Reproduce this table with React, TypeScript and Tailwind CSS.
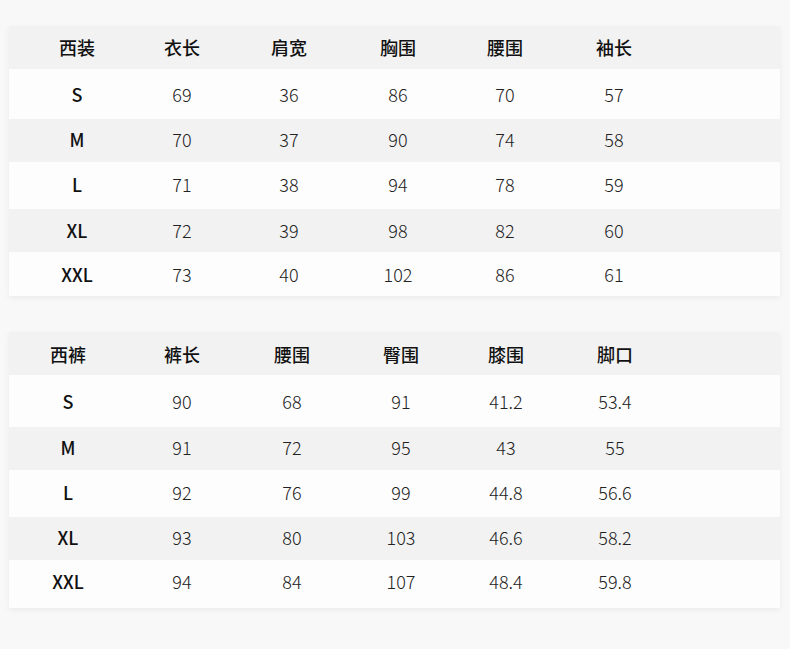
const suit = {
  head: ['西装', '衣长', '肩宽', '胸围', '腰围', '袖长'],
  rows: [
    ['S', '69', '36', '86', '70', '57'],
    ['M', '70', '37', '90', '74', '58'],
    ['L', '71', '38', '94', '78', '59'],
    ['XL', '72', '39', '98', '82', '60'],
    ['XXL', '73', '40', '102', '86', '61'],
  ],
};

const pants = {
  head: ['西裤', '裤长', '腰围', '臀围', '膝围', '脚口'],
  rows: [
    ['S', '90', '68', '91', '41.2', '53.4'],
    ['M', '91', '72', '95', '43', '55'],
    ['L', '92', '76', '99', '44.8', '56.6'],
    ['XL', '93', '80', '103', '46.6', '58.2'],
    ['XXL', '94', '84', '107', '48.4', '59.8'],
  ],
};

type TableProps = {
  data: { head: string[]; rows: string[][] };
  cols: string;
  firstPad: string;
  heights: string[];
};

function SizeTable({ data, cols, firstPad, heights }: TableProps) {
  return (
    <div className="bg-[#fdfdfd] shadow-[0_2px_6px_rgba(0,0,0,0.06)]">
      <div className={`grid ${cols} items-center bg-[#f2f2f2] ${heights[0]}`}>
        {data.head.map((h, i) => (
          <div
            key={h}
            className={`text-center text-[18px] font-medium text-[#111] ${i === 0 ? firstPad : ''}`}
          >
            {h}
          </div>
        ))}
      </div>
      {data.rows.map((row, r) => (
        <div
          key={row[0]}
          className={`grid ${cols} items-center ${heights[r + 1]} ${r % 2 === 1 ? 'bg-[#f2f2f2]' : 'bg-[#fdfdfd]'}`}
        >
          {row.map((c, i) =>
            i === 0 ? (
              <div key={i} className={`text-center text-[18px] font-medium text-[#111] ${firstPad}`}>
                {c}
              </div>
            ) : (
              <div key={i} className="text-center text-[18px] font-light text-[#222]">
                {c}
              </div>
            )
          )}
        </div>
      ))}
    </div>
  );
}

export default function App() {
  return (
    <div
      className="min-h-[649px] w-[790px] bg-[#f8f8f8] pt-[26px] pl-[9px] pr-[10px]"
      style={{ fontFamily: '"Noto Sans CJK SC", "Noto Sans", sans-serif' }}
    >
      <SizeTable
        data={suit}
        cols="grid-cols-[120px_106px_108px_110px_104px_114px_1fr]"
        firstPad="pl-4"
        heights={['h-[43px]', 'h-[50px]', 'h-[43px] pb-[2px]', 'h-[47px] pb-[2px]', 'h-[43px]', 'h-[44px]']}
      />
      <div className="h-[36px]" />
      <SizeTable
        data={pants}
        cols="grid-cols-[118px_110px_110px_108px_102px_116px_1fr]"
        firstPad=""
        heights={['h-[43px] pt-[2px]', 'h-[52px]', 'h-[43px] pb-[2px]', 'h-[47px] pb-[2px]', 'h-[43px] pb-[2px]', 'h-[48px] pb-[6px]']}
      />
    </div>
  );
}
